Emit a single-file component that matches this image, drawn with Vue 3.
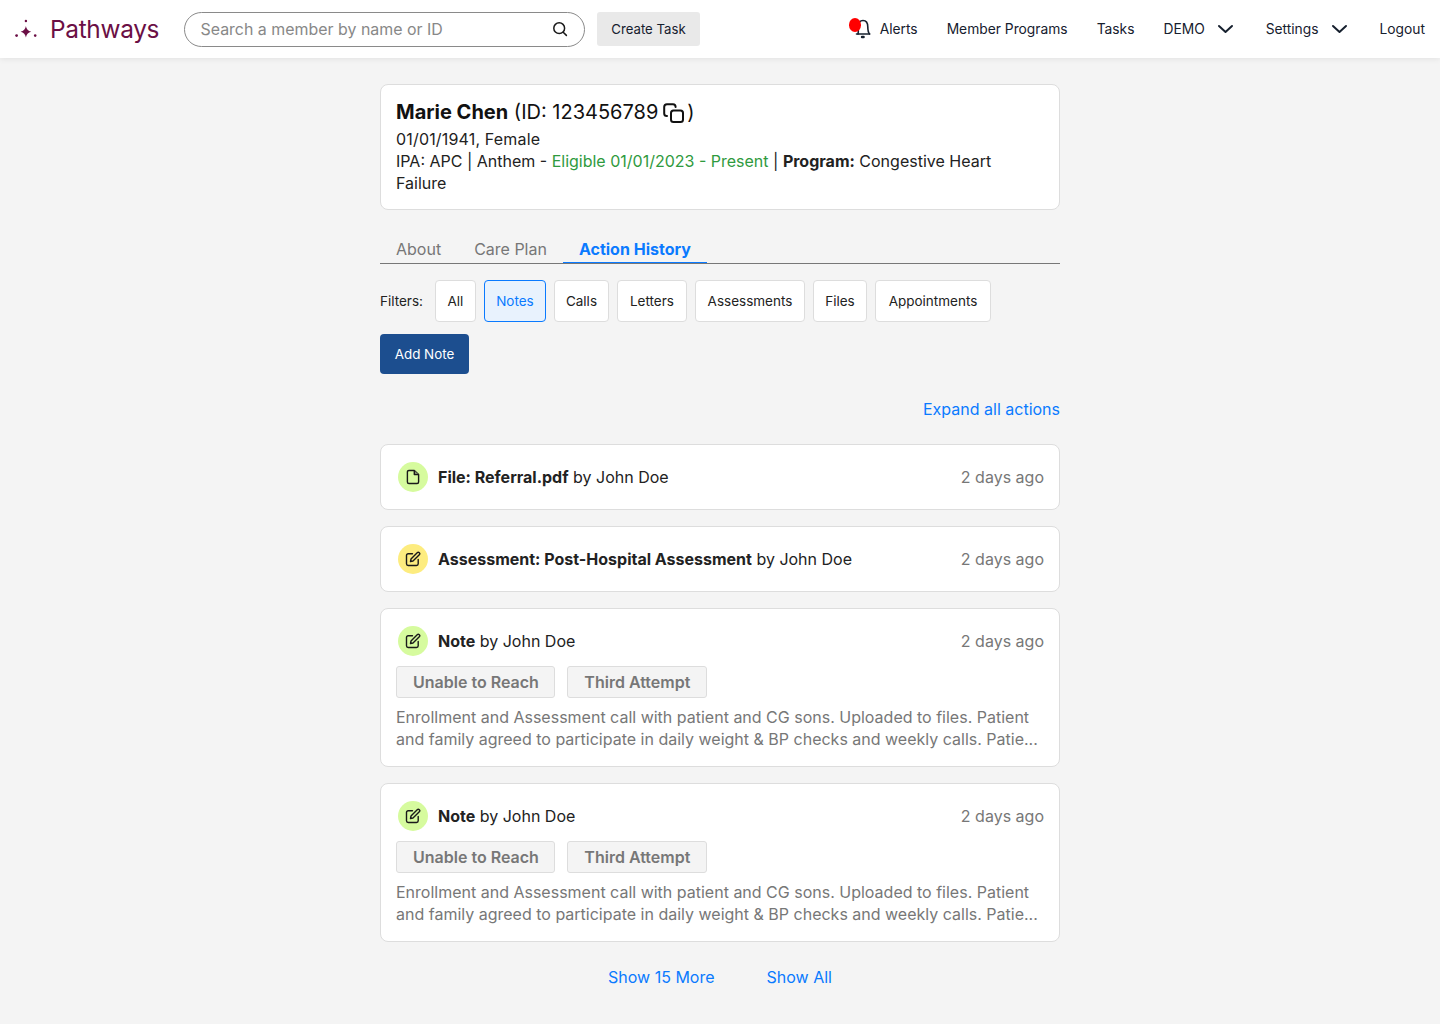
<script setup>
const filters = [
  { label: "All", width: 41 },
  { label: "Notes", width: 62 },
  { label: "Calls", width: 55 },
  { label: "Letters", width: 70 },
  { label: "Assessments", width: 110 },
  { label: "Files", width: 54 },
  { label: "Appointments", width: 116 },
];
const noteText =
  "Enrollment and Assessment call with patient and CG sons. Uploaded to files. Patient and family agreed to participate in daily weight & BP checks and weekly calls. Patie...";
const notes = [1, 2];
</script>

<template>
  <div class="page">
    <header class="topbar">
      <div class="logo">
        <svg width="24" height="24" viewBox="0 0 24 24" class="logo-mark">
          <path d="M10.9 9 Q11.6 13.7 16.2 14.7 Q11.6 15.8 10.9 20.5 Q10.2 15.8 5.6 14.7 Q10.2 13.7 10.9 9 Z" fill="#6b0f45" />
          <circle cx="1.6" cy="18.6" r="1.4" fill="#6b0f45" />
          <circle cx="20.2" cy="18.6" r="1.3" fill="#6b0f45" />
          <circle cx="10.9" cy="4" r="1.2" fill="#6b0f45" />
        </svg>
        <span class="logo-text">Pathways</span>
      </div>
      <div class="search">
        <span class="search-text">Search a member by name or ID</span>
        <svg width="18" height="18" viewBox="0 0 18 18" fill="none" stroke="#1a1a1a" stroke-width="1.5" stroke-linecap="round">
          <circle cx="8.2" cy="8.2" r="5.4" />
          <path d="M12.2 12.2 L15.4 15.4" />
        </svg>
      </div>
      <button class="create-task">Create Task</button>
      <nav class="nav">
        <a class="nav-item alerts">
          <span class="bell">
            <svg width="22" height="24" viewBox="0 0 22 24" fill="none" stroke="#16202e" stroke-width="1.6" stroke-linecap="round" stroke-linejoin="round">
              <path d="M9 17 C9.6 15 9.2 12.5 9.2 10 C9.2 6 11 3.5 14 3.5 C17 3.5 18.8 6 18.8 10 C18.8 13 19.2 15.5 20.6 17" />
              <path d="M7.5 17 H20.6" />
              <path d="M13 20 H14.6" stroke-width="2.4" />
            </svg>
            <span class="dot"></span>
          </span>
          Alerts
        </a>
        <a class="nav-item">Member Programs</a>
        <a class="nav-item">Tasks</a>
        <a class="nav-item">
          DEMO
          <svg class="chev" width="17" height="10" viewBox="0 0 17 10" fill="none" stroke="#16202e" stroke-width="2" stroke-linecap="round" stroke-linejoin="round">
            <path d="M2 2 L8.5 8 L15 2" />
          </svg>
        </a>
        <a class="nav-item">
          Settings
          <svg class="chev" width="17" height="10" viewBox="0 0 17 10" fill="none" stroke="#16202e" stroke-width="2" stroke-linecap="round" stroke-linejoin="round">
            <path d="M2 2 L8.5 8 L15 2" />
          </svg>
        </a>
        <a class="nav-item">Logout</a>
      </nav>
    </header>

    <main class="content">
      <section class="member card">
        <div class="member-name">
          <strong>Marie Chen</strong> <span>(ID: 123456789</span><svg class="copy" width="21" height="20" viewBox="0 0 21 20" fill="none" stroke="#111" stroke-width="2" stroke-linejoin="round" stroke-linecap="round">
            <rect x="8" y="7.5" width="12" height="11.5" rx="2.5" />
            <path d="M4 13 C2.4 13 1.2 12 1.2 10.5 V4 C1.2 2.4 2.4 1.2 4 1.2 H10 C11.6 1.2 12.6 2.4 12.6 4" />
          </svg><span>)</span>
        </div>
        <div class="member-info">
          <span class="dob">01/01/1941, Female</span><br />
          <span>IPA: APC | Anthem - </span><span class="green">Eligible 01/01/2023 - Present</span><span> | </span><strong>Program:</strong><span> Congestive Heart</span><br />
          <span>Failure</span>
        </div>
      </section>

      <div class="tabs">
        <span class="tab">About</span>
        <span class="tab">Care Plan</span>
        <span class="tab active">Action History</span>
      </div>

      <div class="filters">
        <span class="filters-label">Filters:</span>
        <button
          v-for="f in filters"
          :key="f.label"
          class="filter"
          :class="{ selected: f.label === 'Notes' }"
          :style="{ width: f.width + 'px' }"
        >
          {{ f.label }}
        </button>
      </div>

      <button class="add-note">Add Note</button>

      <div class="expand"><a class="link">Expand all actions</a></div>

      <div class="actions">
        <article class="card action">
          <div class="action-head">
            <span class="badge lime">
              <svg width="16" height="16" viewBox="0 0 16 16" fill="none" stroke="#1a1a1a" stroke-width="1.4" stroke-linejoin="round">
                <path d="M2.4 3 C2.4 2 3 1.5 3.9 1.5 H9.3 L13.6 5.6 V13 C13.6 14 13 14.5 12.1 14.5 H3.9 C3 14.5 2.4 14 2.4 13 Z" />
                <path d="M9.3 1.5 V5.6 H13.6" fill="#7d8a6a" />
              </svg>
            </span>
            <span class="action-title"><strong>File: Referral.pdf</strong> by John Doe</span>
            <span class="when">2 days ago</span>
          </div>
        </article>

        <article class="card action">
          <div class="action-head">
            <span class="badge yellow">
              <svg width="16" height="16" viewBox="0 0 16 16" fill="none" stroke="#1a1a1a" stroke-width="1.4" stroke-linejoin="round" stroke-linecap="round">
                <path d="M7.5 2.8 H3.2 C2.2 2.8 1.5 3.5 1.5 4.5 V12.8 C1.5 13.8 2.2 14.5 3.2 14.5 H11.5 C12.5 14.5 13.2 13.8 13.2 12.8 V8.5" />
                <path d="M12.2 1.7 C12.8 1.1 13.7 1.1 14.3 1.7 C14.9 2.3 14.9 3.2 14.3 3.8 L8 10 L5.5 10.5 L6 8 Z" />
              </svg>
            </span>
            <span class="action-title"><strong>Assessment: Post-Hospital Assessment</strong> by John Doe</span>
            <span class="when">2 days ago</span>
          </div>
        </article>

        <article v-for="n in notes" :key="n" class="card action note">
          <div class="action-head">
            <span class="badge lime">
              <svg width="16" height="16" viewBox="0 0 16 16" fill="none" stroke="#1a1a1a" stroke-width="1.4" stroke-linejoin="round" stroke-linecap="round">
                <path d="M7.5 2.8 H3.2 C2.2 2.8 1.5 3.5 1.5 4.5 V12.8 C1.5 13.8 2.2 14.5 3.2 14.5 H11.5 C12.5 14.5 13.2 13.8 13.2 12.8 V8.5" />
                <path d="M12.2 1.7 C12.8 1.1 13.7 1.1 14.3 1.7 C14.9 2.3 14.9 3.2 14.3 3.8 L8 10 L5.5 10.5 L6 8 Z" />
              </svg>
            </span>
            <span class="action-title"><strong>Note</strong> by John Doe</span>
            <span class="when">2 days ago</span>
          </div>
          <div class="tags">
            <span class="tag">Unable to Reach</span>
            <span class="tag">Third Attempt</span>
          </div>
          <p class="note-text">{{ noteText }}</p>
        </article>
      </div>

      <div class="more">
        <a class="link">Show 15 More</a>
        <a class="link">Show All</a>
      </div>
    </main>
  </div>
</template>

<style>
html,
body {
  margin: 0;
  background: #f4f4f4;
}
</style>

<style scoped>
.page {
  min-height: 1024px;
  background: #f4f4f4;
  font-family: Inter, "Liberation Sans", sans-serif;
  color: #222;
  font-size: 16px;
}

.topbar {
  height: 58px;
  box-sizing: border-box;
  background: #fff;
  box-shadow: 0 1px 6px rgba(0, 0, 0, 0.08);
  display: flex;
  align-items: center;
  padding: 0 15px;
}

.logo {
  display: flex;
  align-items: center;
  width: 169px;
  flex-shrink: 0;
}

.logo-mark {
  margin-right: 11px;
}

.logo-text {
  font-size: 24.4px;
  color: #6b0f45;
  letter-spacing: -0.3px;
}

.search {
  width: 401px;
  height: 35px;
  box-sizing: border-box;
  border: 1px solid #8a8a8a;
  border-radius: 18px;
  display: flex;
  align-items: center;
  justify-content: space-between;
  padding: 0 15px 0 15.5px;
  margin-right: 12px;
}

.search-text {
  color: #888;
  font-size: 15.95px;
}

.create-task {
  width: 103px;
  height: 34px;
  border: none;
  border-radius: 3px;
  background: #e9e9e9;
  color: #16202e;
  font-family: inherit;
  font-size: 13.2px;
  padding: 0;
}

.nav {
  margin-left: auto;
  display: flex;
  align-items: center;
  gap: 29px;
}

.nav-item {
  display: flex;
  align-items: center;
  font-size: 13.8px;
  color: #16202e;
}

.chev {
  margin: 0 3px 0 12px;
}

.bell {
  position: relative;
  display: block;
  width: 22px;
  height: 24px;
  margin-right: 9px;
}

.dot {
  position: absolute;
  left: 0;
  top: 1px;
  width: 12px;
  height: 13.5px;
  border-radius: 50%;
  background: #f00;
}

.content {
  width: 680px;
  margin: 0 auto;
  padding-top: 26px;
}

.card {
  background: #fff;
  border: 1px solid #ddd;
  border-radius: 8px;
  box-sizing: border-box;
}

.member {
  height: 126px;
  padding: 14px 15px;
}

.member-name {
  font-size: 20px;
  line-height: 26px;
  color: #111;
}

.copy {
  vertical-align: -4px;
  margin: 0 3px 0 5px;
}

.member-info {
  margin-top: 3px;
  line-height: 22px;
  color: #222;
}

.dob {
  letter-spacing: 0.17px;
}

.green {
  color: #2f9a3e;
}

.tabs {
  display: flex;
  gap: 33px;
  margin-top: 29px;
  height: 24px;
  padding-left: 16px;
  border-bottom: 1px solid #777;
  font-size: 16px;
  line-height: 20px;
}

.tab {
  color: #777;
  height: 24px;
}

.tab.active {
  position: relative;
  margin-left: -1px;
  color: #0a7aff;
  font-weight: 700;
}

.tab.active::after {
  content: "";
  position: absolute;
  left: -16px;
  right: -16px;
  bottom: 0;
  height: 1px;
  background: #0a7aff;
}

.filters {
  display: flex;
  align-items: center;
  gap: 8px;
  margin-top: 16px;
}

.filters-label {
  font-size: 13.5px;
  margin-right: 4px;
}

.filter {
  height: 42px;
  padding: 0;
  border: 1px solid #ddd;
  border-radius: 4px;
  background: #fff;
  color: #222;
  font-family: inherit;
  font-size: 13.5px;
}

.filter.selected {
  border-color: #0a7aff;
  background: #e8f2fd;
  color: #0a7aff;
}

.add-note {
  display: block;
  margin-top: 12px;
  width: 89px;
  height: 40px;
  border: none;
  border-radius: 4px;
  background: #1c4e8f;
  color: #fff;
  font-family: inherit;
  font-size: 13.4px;
  padding: 0;
}

.expand {
  margin-top: 24px;
  text-align: right;
  line-height: 22px;
}

.link {
  color: #0a7aff;
}

.actions {
  display: flex;
  flex-direction: column;
  gap: 16px;
  margin-top: 24px;
}

.action {
  padding: 17px 15px;
}

.action-head {
  display: flex;
  align-items: center;
  height: 30px;
}

.badge {
  width: 30px;
  height: 30px;
  border-radius: 50%;
  margin: 0 10px 0 2px;
  display: flex;
  align-items: center;
  justify-content: center;
}

.lime {
  background: #d6fb9e;
}

.yellow {
  background: #fdec7f;
}

.action-title strong {
  font-weight: 700;
}

.when {
  margin-left: auto;
  color: #777;
}

.note {
  padding-bottom: 16px;
}

.tags {
  display: flex;
  gap: 12px;
  margin-top: 10px;
}

.tag {
  height: 32px;
  box-sizing: border-box;
  padding: 0 15.5px 0 16px;
  border: 1px solid #ddd;
  border-radius: 3px;
  background: #f4f4f4;
  color: #777;
  font-weight: 600;
  line-height: 30px;
}

.note-text {
  margin: 8px 0 0;
  line-height: 22px;
  color: #777;
}

.more {
  display: flex;
  justify-content: center;
  gap: 52px;
  margin-top: 24px;
  line-height: 22px;
}
</style>
